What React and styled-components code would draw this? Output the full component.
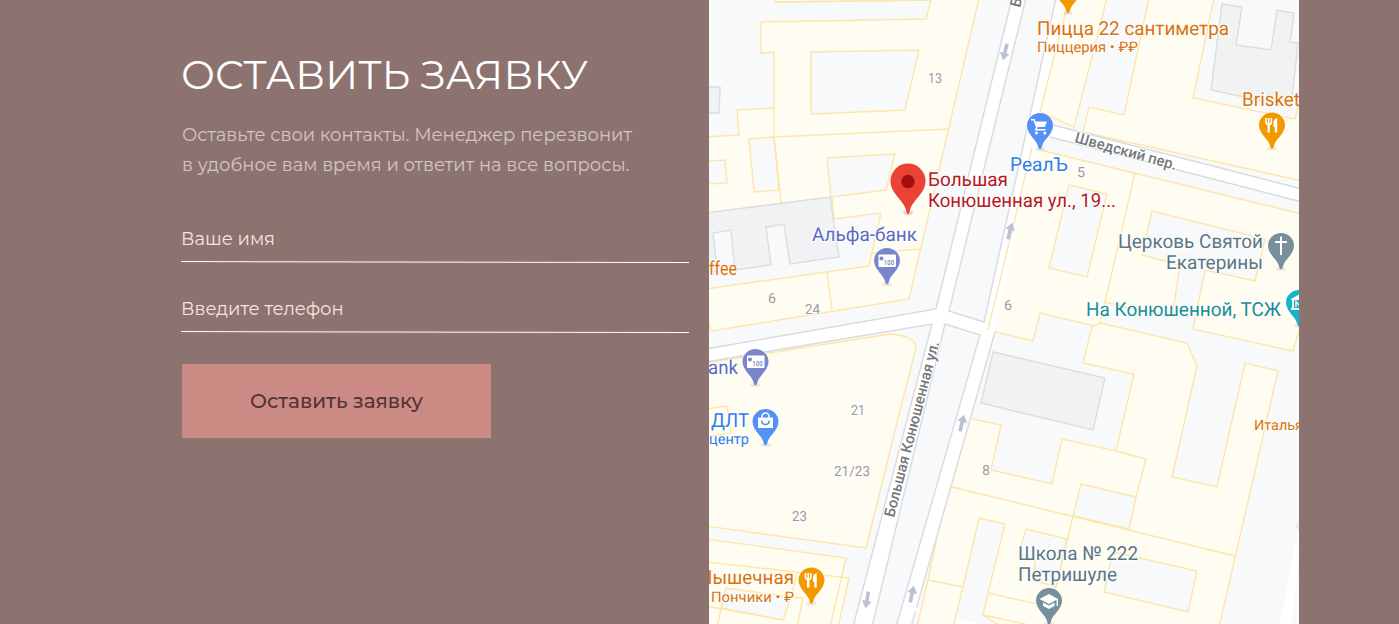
import React from 'react';
import styled, { createGlobalStyle } from 'styled-components';

const GlobalStyle = createGlobalStyle`
  * { box-sizing: border-box; }
  body { margin: 0; background: #8d736f; }
`;

const Page = styled.main`
  display: flex;
  width: 1399px;
  height: 624px;
  overflow: hidden;
  background: #8d736f;
  font-family: Montserrat, Inter, sans-serif;
`;

const FormPanel = styled.section`
  width: 709px;
  padding: 47px 20px 0 181px;
`;

const Title = styled.h2`
  margin: 0;
  color: #fff;
  font-size: 40px;
  line-height: 56px;
  font-weight: 400;
  letter-spacing: 0.06px;
  white-space: nowrap;
`;

const Lead = styled.p`
  margin: 17px 0 0 1px;
  color: rgba(255, 255, 255, 0.6);
  font-size: 18px;
  line-height: 30px;
  font-weight: 400;
  white-space: nowrap;
`;

const Fields = styled.div`
  display: flex;
  flex-direction: column;
  gap: 30px;
  margin-top: 43px;
`;

const Field = styled.label`
  display: flex;
  flex-direction: column;
  justify-content: space-between;
  height: 40px;
  color: #f3e6e0;
  font-size: 18px;
  line-height: 32px;
  font-weight: 400;
`;

const Underline = styled.span`
  width: 508px;
  height: 1px;
  background: #fff;
  transform: translateY(-0.5px) rotate(0.113deg);
`;

const SubmitButton = styled.button`
  width: 309px;
  height: 74px;
  margin: 31px 0 0 1px;
  padding: 0;
  border: 0;
  background: #cc8a85;
  color: #533434;
  font: 500 20px/74px Montserrat, Inter, sans-serif;
`;

const Map = styled.svg`
  display: block;
  width: 590px;
  height: 624px;
  background: #f8f9fb;
`;

const Block = styled.path`
  fill: #fffcf1;
  stroke: #fde6a9;
  stroke-width: 1.4;
`;
const Yard = styled(Block)`
  fill: #f8f9fb;
`;
const Divider = styled(Block)`
  fill: none;
`;
const Grey = styled.path`
  fill: #f1f2f4;
  stroke: #dcdde0;
  stroke-width: 1.4;
`;
const Road = styled.path`
  fill: #fff;
`;
const Curb = styled.path`
  fill: none;
  stroke: #d9dade;
  stroke-width: 1.4;
`;

const MapText = styled.text`
  font-family: Roboto, sans-serif;
  font-size: ${(p) => p.$size}px;
  font-weight: ${(p) => p.$weight || 400};
  fill: ${(p) => p.$color};
  stroke: #fff;
  stroke-width: 2.4px;
  stroke-opacity: 0.85;
  stroke-linejoin: round;
  paint-order: stroke;
  text-rendering: geometricPrecision;
`;

const ORANGE = '#d9730d';
const SLATE = '#5b7684';

const labels = [
  ['Пицца 22 сантиметра', 1037, 34.5, 192, 19.3, ORANGE],
  ['Пиццерия • ₽₽', 1037, 52, 101, 14.5, ORANGE],
  ['Brisket', 1242, 105.5, 58, 19.3, ORANGE],
  ['РеалЪ', 1010, 171, 58, 19.3, '#2f7de9'],
  ['Большая', 928, 185.5, 80, 19.3, '#b5191e'],
  ['Конюшенная ул., 19...', 928, 207, 188, 19.3, '#b5191e'],
  ['Альфа-банк', 812, 241.2, 105, 19.3, '#5b6bc0'],
  ['ffee', 709, 274.5, 28, 19.3, ORANGE],
  ['ank', 708, 374.2, 30, 19.3, '#5b6bc0'],
  ['ДЛТ', 711, 426.7, 38, 19.3, '#2f7de9'],
  ['центр', 709, 444, 40, 14.5, '#2f7de9'],
  ['Церковь Святой', 1118, 247.5, 145, 19.3, SLATE],
  ['Екатерины', 1166, 269, 97, 19.3, SLATE],
  ['На Конюшенной, ТСЖ', 1086, 316, 195, 19.3, '#178e97'],
  ['Школа № 222', 1018, 559.5, 120, 19.3, SLATE],
  ['Петришуле', 1018, 581.2, 99, 19.3, SLATE],
  ['Италья', 1254, 430, 49, 14.5, ORANGE],
  ['Пышечная', 699, 584, 95, 19.3, ORANGE],
  ['Пончики • ₽', 711, 601.5, 83, 14.5, ORANGE],
];

const numbers = [
  ['13', 928, 83, 14],
  ['5', 1077, 177, 8],
  ['6', 768, 303, 8],
  ['24', 805, 314, 15],
  ['6', 1004, 310, 8],
  ['21', 851, 415, 14],
  ['21/23', 834, 476, 36],
  ['23', 792, 521, 15],
  ['8', 982, 475, 8],
];

const Pin = ({ x, y, color, children }) => (
  <g transform={`translate(${x} ${y})`}>
    <ellipse cx="0" cy="36" rx="5" ry="2" fill="#777" opacity=".15" />
    <path
      d="M0 36.500 C-1.500 36.500-1.800 34-2.400 32 C-4.500 26-13 21-13 12.500 A13 12.500 0 0 1 13 12.500 C13 21 4.500 26 2.400 32 C1.800 34 1.500 36.500 0 36.500Z"
      fill={color}
      stroke="#fff"
      strokeWidth="1"
      paintOrder="stroke"
    />
    {children}
  </g>
);

const Food = () => (
  <g fill="none" stroke="#fff" strokeWidth="1.6">
    <path d="M-6 5.500v4q0 2.500 2.700 2.500t2.700-2.500V5.500M-3.300 5.500v6" />
    <path d="M-3.300 11v9M4 12v8" strokeWidth="2.400" />
    <path d="M5.200 5.500v9H1.500V10q0-3.500 3.700-4.500Z" fill="#fff" stroke="none" />
  </g>
);

const Cash = () => (
  <g>
    <rect x="-8.500" y="6.500" width="17.500" height="12.500" rx="1" fill="#fff" />
    <circle cx="-5.500" cy="10.500" r="2" fill="#7986cb" />
    <text x="-3.200" y="17" fontFamily="Roboto, sans-serif" fontSize="7.500" fontWeight="500" fill="#7986cb" textLength="10.500" lengthAdjust="spacingAndGlyphs">100</text>
  </g>
);

const Arrow = ({ x, y, angle }) => (
  <path
    transform={`translate(${x} ${y}) rotate(${angle})`}
    d="M-1.800 8.500V-1H-5L0-8.500L5-1H1.800V8.500Z"
    fill="#bcc0d6"
  />
);

function CityMap() {
  return (
    <Map viewBox="709 0 590 624">
      <Block d="M775-2L776 2L931 0L926 19L761 22V53L774 52V108L737 110L739 135L706 137V213L832 197L834 219L881 213L869 266L706 289V310L711 331L909 299L979-2Z" />
      <Yard d="M811 52L919 50L905 110L811 114ZM749 139L774 137L779 190L754 192ZM706 161L725 160L727 183L706 184ZM827 158L895 154L886 190L831 197Z" />
      <Yard d="M775-2L776 2L931 0V-3Z" />
      <Divider d="M774 108V137L949 129M774 137L781 203M872 253L921 249M827 272L832 310" />
      <Grey d="M706 213L830 197L839 257L790 264L784 224L766 227L771 265L735 270L731 230L713 233L717 271L706 272ZM706 87H720L719 113H706Z" />

      <Block d="M1069-2L1040 112L1074 127L1107-2Z" />
      <Block d="M1149-2L1124 115L1089 107L1083 132L1302 181V90L1295 119L1193 98L1214-2Z" />
      <Grey d="M1222 4L1242 7L1236 45L1271 50L1277 10L1294 13L1290 42L1298 43L1291 107L1211 90Z" />

      <Block d="M1032 148L1302 214V320L1293 351L1193 329L1205 270L1255 281L1265 239L1152 211L1142 255L1180 265L1172 318L1105 302L1099 327L1040 313L1033 341L988 330Z" />
      <Yard d="M1069 185L1107 194L1087 277L1049 268Z" />
      <Divider d="M1135 173L1105 302" />

      <Block d="M1092 327L1100 323L1187 343L1197 366L1172 477L1217 487L1245 363L1278 371L1219 627H917L928 580L948 486L963 417L1001 425L991 470L1052 484L1062 439L1116 451L1134 374L1083 363Z" />
      <Yard d="M1081 484L1136 497L1129 529L1073 516ZM1026 529L1067 539L1056 587L1033 580L1035 560L1019 553ZM1113 552L1197 571L1188 612L1104 592ZM979 518L1005 524L988 593L983 615L1002 627H953L963 587Z" />
      <Divider d="M948 486L1235 556M1116 451L1146 459L1136 497M1073 516L1053 600M928 580L963 587M988 593L1037 604M983 615L1043 628" />
      <Grey d="M993 352L1105 378L1093 430L981 403Z" />

      <Block d="M706 363L890 334Q916 336 916 348L900 410L866 548L706 526Z" />
      <Divider d="M706 409L727 406L731 433L706 437" />
      <Block d="M706 539L846 558L830 627H706Z" />
      <Block d="M706 562L849 578L838 627H706Z" />
      <Yard d="M726 588L791 597L783 620L721 608Z" />
      <Divider d="M846 558L830 627M706 606L783 620M726 588L717 627M803 598L797 627M797 573L791 597L803 598" />

      <Road d="M1012-2L936 309L706 349V361L932 324L853 627H872L945 324L980 335L896 627H912L995 332L1031 160L1050 137L1302 202V189L1053 125L1040 118L1069-2H1056L984 322L949 311L1026-2Z" />
      <Curb d="M1012-2L936 309L706 349M706 362L932 324L853 627M872 627L945 324L980 335L896 627M911 627L995 332M1026-2L949 311L984 322L1056-2M1053 125L1302 189M1050 137L1302 202" />
      <Divider d="M1069-2L1040 112M1032 148L988 330" />
      <Road d="M1302 530L1291 627H1279L1300 520ZM912 606L920 609L919 612L911 609ZM957 619L1005 628H957Z" />
      <circle cx="1302" cy="526" r="5" fill="#f1f2f4" stroke="#dcdde0" />

      <Arrow x={1005} y={52} angle={194} />
      <Arrow x={1010} y={231} angle={14} />
      <Arrow x={962} y={423} angle={14} />
      <Arrow x={867} y={600} angle={190} />
      <Arrow x={912} y={594} angle={12} />

      <Pin x={1068} y={-23} color="#f29900" />
      <Pin x={1040} y={113} color="#5491f5">
        <path d="M-6 8.500H7L4.800 14H-3.500Z" fill="#fff" />
        <path d="M-9 6.800H-6L-3.200 14.500L-4.300 16.800H5.500" fill="none" stroke="#fff" strokeWidth="1.500" />
        <circle cx="-3.500" cy="20" r="1.500" fill="#fff" />
        <circle cx="4.800" cy="20" r="1.500" fill="#fff" />
      </Pin>
      <Pin x={1272} y={112.5} color="#f29900"><Food /></Pin>
      <Pin x={811.5} y={567.5} color="#f29900"><Food /></Pin>
      <Pin x={887} y={248} color="#7986cb"><Cash /></Pin>
      <Pin x={755.5} y={349} color="#7986cb"><Cash /></Pin>
      <Pin x={765.5} y={409} color="#5491f5">
        <path d="M-7.500 8.500H7.500V19H-7.500Z" fill="#fff" />
        <path d="M-3.500 8.500V7.500a3.500 3.500 0 0 1 7 0v1" fill="none" stroke="#fff" strokeWidth="1.600" />
        <path d="M-3.700 11.500q0 4 3.700 4t3.700-4" fill="none" stroke="#5491f5" strokeWidth="1.600" />
      </Pin>
      <Pin x={1281} y={233} color="#78909c">
        <path d="M0 3.500V22M-6 9H6" stroke="#fff" strokeWidth="2" />
      </Pin>
      <Pin x={1299} y={290} color="#12b5cb">
        <path d="M-8 9L0 4.500L8 9V10H-8ZM-8 18H8V20H-8ZM-7 10h2v8h-2Z" fill="#fff" />
        <path d="M-3 17V11.500L0 15L3 11.500V17" fill="none" stroke="#fff" strokeWidth="1.300" />
      </Pin>
      <Pin x={1049} y={588} color="#78909c">
        <path d="M-9.500 11L0 6L9 11L0 16ZM-6 14.500V18L0 21L5.500 18V14.500L0 17.500Z" fill="#fff" />
        <path d="M8.300 11v7" stroke="#fff" strokeWidth="1.400" />
      </Pin>

      <g>
        <ellipse cx="908" cy="213" rx="5" ry="2.4" fill="#777" opacity=".25" />
        <path d="M908 214C906.5 214 906.4 211 905.5 208.500C902 199 890.500 193 890.500 181A17.500 17.500 0 0 1 925.500 181C925.500 193 914 199 910.500 208.500C909.600 211 909.500 214 908 214Z" fill="#ea4335" />
        <circle cx="908" cy="181.500" r="6.700" fill="#a50e0e" />
      </g>

      {labels.map(([text, x, y, width, size, color]) => (
        <MapText key={text} x={x} y={y} textLength={width} lengthAdjust="spacingAndGlyphs" $size={size} $color={color}>
          {text}
        </MapText>
      ))}
      {numbers.map(([text, x, y, width]) => (
        <MapText key={x} x={x} y={y} textLength={width} lengthAdjust="spacingAndGlyphs" $size={14} $color="#999b9e">
          {text}
        </MapText>
      ))}
      <MapText transform="translate(894 518) rotate(-75.500)" textLength="181" lengthAdjust="spacingAndGlyphs" $size={15} $weight={500} $color="#74777b">
        Большая Конюшенная ул.
      </MapText>
      <MapText transform="translate(1020 8) rotate(-77)" $size={15} $weight={500} $color="#74777b">Б</MapText>
      <MapText transform="translate(1074 142) rotate(15.500)" textLength="105" lengthAdjust="spacingAndGlyphs" $size={15} $weight={500} $color="#74777b">
        Шведский пер.
      </MapText>
    </Map>
  );
}

export default function App() {
  return (
    <>
      <GlobalStyle />
      <Page>
        <FormPanel>
          <Title>ОСТАВИТЬ ЗАЯВКУ</Title>
          <Lead>
            Оставьте свои контакты. Менеджер перезвонит
            <br />
            в удобное вам время и ответит на все вопросы.
          </Lead>
          <Fields>
            <Field>Ваше имя<Underline /></Field>
            <Field>Введите телефон<Underline /></Field>
          </Fields>
          <SubmitButton>Оставить заявку</SubmitButton>
        </FormPanel>
        <CityMap />
      </Page>
    </>
  );
}
